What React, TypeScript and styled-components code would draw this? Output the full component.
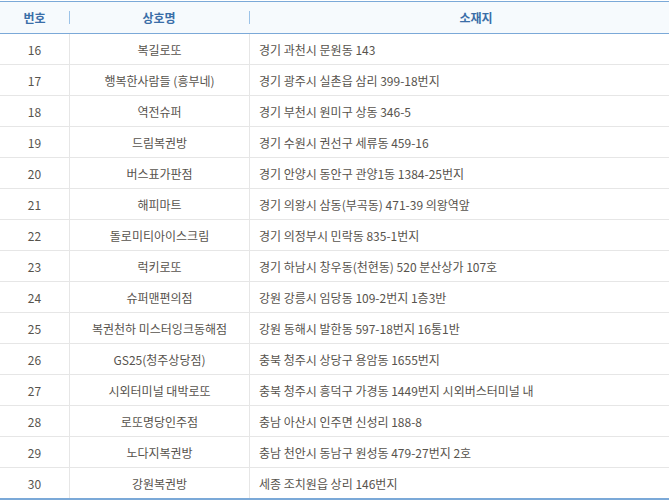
import React from "react";
import styled, { createGlobalStyle } from "styled-components";

const Global = createGlobalStyle`
  html, body { margin: 0; padding: 0; background: #fff; }
  body { font-family: "Noto Sans CJK KR", "Noto Sans", sans-serif; }
`;

const Wrap = styled.div`
  width: 669px;
  padding-top: 1px;
`;

const Table = styled.div`
  border-top: 1px solid #7ba9d8;
  border-bottom: 2px solid #7ba9d8;
`;

const HeadRow = styled.div`
  display: grid;
  grid-template-columns: 69px 180px 1fr;
  height: 31px;
  background: #f6fafd;
  border-bottom: 1px solid #7ba9d8;
`;

const HeadCell = styled.div<{ $sep?: boolean; $shift?: number }>`
  position: relative;
  display: flex;
  align-items: center;
  justify-content: center;
  padding-left: ${(p) => p.$shift ?? 0}px;
  font-size: 12px;
  font-weight: 700;
  color: #3a6ea8;
  &::before {
    content: "";
    display: ${(p) => (p.$sep ? "block" : "none")};
    position: absolute;
    left: 0;
    top: 9px;
    width: 1px;
    height: 13px;
    background: #9cc3e8;
  }
`;

const Row = styled.div<{ $last?: boolean }>`
  display: grid;
  grid-template-columns: 69px 180px 1fr;
  height: 30px;
  border-bottom: ${(p) => (p.$last ? "0" : "1px solid #e6e6e6")};
  font-size: 12px;
  color: #57534d;
`;

const Cell = styled.div<{ $align?: "center" | "left"; $sep?: boolean }>`
  display: flex;
  align-items: center;
  justify-content: ${(p) => (p.$align === "left" ? "flex-start" : "center")};
  padding-left: ${(p) => (p.$align === "left" ? "9px" : "0")};
  border-left: ${(p) => (p.$sep ? "1px solid #e6e6e6" : "0")};
  white-space: nowrap;
  overflow: hidden;
`;

const data: [number, string, string][] = [
  [16, "복길로또", "경기 과천시 문원동 143"],
  [17, "행복한사람들 (흥부네)", "경기 광주시 실촌읍 삼리 399-18번지"],
  [18, "역전슈퍼", "경기 부천시 원미구 상동 346-5"],
  [19, "드림복권방", "경기 수원시 권선구 세류동 459-16"],
  [20, "버스표가판점", "경기 안양시 동안구 관양1동 1384-25번지"],
  [21, "해피마트", "경기 의왕시 삼동(부곡동) 471-39 의왕역앞"],
  [22, "돌로미티아이스크림", "경기 의정부시 민락동 835-1번지"],
  [23, "럭키로또", "경기 하남시 창우동(천현동) 520 분산상가 107호"],
  [24, "슈퍼맨편의점", "강원 강릉시 임당동 109-2번지 1층3반"],
  [25, "복권천하 미스터잉크동해점", "강원 동해시 발한동 597-18번지 16통1반"],
  [26, "GS25(청주상당점)", "충북 청주시 상당구 용암동 1655번지"],
  [27, "시외터미널 대박로또", "충북 청주시 흥덕구 가경동 1449번지 시외버스터미널 내"],
  [28, "로또명당인주점", "충남 아산시 인주면 신성리 188-8"],
  [29, "노다지복권방", "충남 천안시 동남구 원성동 479-27번지 2호"],
  [30, "강원복권방", "세종 조치원읍 상리 146번지"],
];

export default function App() {
  return (
    <Wrap>
      <Global />
      <Table>
        <HeadRow>
          <HeadCell>번호</HeadCell>
          <HeadCell $sep>상호명</HeadCell>
          <HeadCell $sep $shift={34}>소재지</HeadCell>
        </HeadRow>
        {data.map(([n, name, addr], i) => (
          <Row key={n} $last={i === data.length - 1}>
            <Cell>{n}</Cell>
            <Cell $sep>{name}</Cell>
            <Cell $sep $align="left">{addr}</Cell>
          </Row>
        ))}
      </Table>
    </Wrap>
  );
}
